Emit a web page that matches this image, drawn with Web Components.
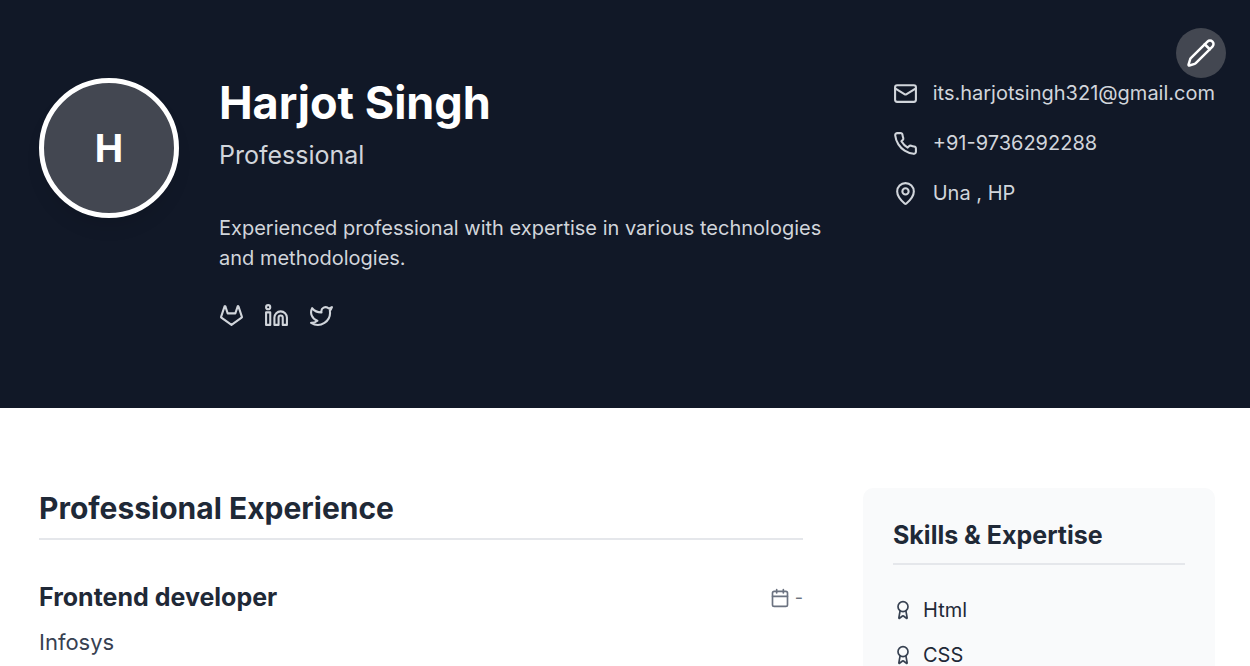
<!DOCTYPE html>
<html lang="en">
<head>
  <meta charset="utf-8">
  <meta name="viewport" content="width=device-width, initial-scale=1">
  <title>Harjot Singh</title>
  <style>
    body {
      margin: 0;
      background-color: #ffffff;
      color: #1f2937;
      font-family: Inter, "Liberation Sans", sans-serif;
      font-size: 20px;
      line-height: 30px;
    }
  </style>
</head>
<body>
  <resume-page>
    <profile-header slot="header" name="Harjot Singh" role-title="Professional">
      Experienced professional with expertise in various technologies and methodologies.
      <social-link slot="social" icon="gitlab" label="GitLab"></social-link>
      <social-link slot="social" icon="linkedin" label="LinkedIn"></social-link>
      <social-link slot="social" icon="twitter" label="Twitter"></social-link>
      <contact-item slot="contact" icon="mail" href="mailto:its.harjotsingh321@gmail.com">its.harjotsingh321@gmail.com</contact-item>
      <contact-item slot="contact" icon="phone" href="tel:+919736292288">+91-9736292288</contact-item>
      <contact-item slot="contact" icon="pin">Una , HP</contact-item>
    </profile-header>

    <resume-section heading="Professional Experience">
      <experience-item>
        Frontend developer
        <span slot="company">Infosys</span>
        <span slot="date">-</span>
      </experience-item>
    </resume-section>

    <skills-card slot="aside" heading="Skills &amp; Expertise">
      <skill-item>Html</skill-item>
      <skill-item>CSS</skill-item>
    </skills-card>
  </resume-page>

  <script>
    const icons = {
      mail: '<rect width="20" height="16" x="2" y="4" rx="2"/><path d="m22 7-8.97 5.7a1.94 1.94 0 0 1-2.06 0L2 7"/>',
      phone: '<path d="M22 16.92v3a2 2 0 0 1-2.18 2 19.79 19.79 0 0 1-8.63-3.07 19.5 19.5 0 0 1-6-6 19.79 19.79 0 0 1-3.07-8.67A2 2 0 0 1 4.11 2h3a2 2 0 0 1 2 1.72 12.84 12.84 0 0 0 .7 2.81 2 2 0 0 1-.45 2.11L8.09 9.91a16 16 0 0 0 6 6l1.27-1.27a2 2 0 0 1 2.11-.45 12.84 12.84 0 0 0 2.81.7A2 2 0 0 1 22 16.92z"/>',
      pin: '<path d="M20 10c0 4.993-5.539 10.193-7.399 11.799a1 1 0 0 1-1.202 0C9.539 20.193 4 14.993 4 10a8 8 0 0 1 16 0"/><circle cx="12" cy="10" r="3"/>',
      gitlab: '<path d="m22 13.29-3.33-10a.42.42 0 0 0-.14-.18.38.38 0 0 0-.22-.11.39.39 0 0 0-.23.07.42.42 0 0 0-.14.18l-2.26 6.67H8.32L6.1 3.26a.42.42 0 0 0-.1-.18.38.38 0 0 0-.26-.08.39.39 0 0 0-.23.07.42.42 0 0 0-.14.18L2 13.29a.74.74 0 0 0 .27.83L12 21l9.69-6.88a.71.71 0 0 0 .31-.83Z"/>',
      linkedin: '<path d="M16 8a6 6 0 0 1 6 6v7h-4v-7a2 2 0 0 0-2-2 2 2 0 0 0-2 2v7h-4v-7a6 6 0 0 1 6-6z"/><rect width="4" height="12" x="2" y="9"/><circle cx="4" cy="4" r="2"/>',
      twitter: '<path d="M22 4s-.7 2.1-2 3.4c1.6 10-9.4 17.3-18 11.6 2.2.1 4.4-.6 6-2C3 15.5.5 9.6 3 5c2.2 2.6 5.6 4.1 9 4-.9-4.2 4-6.6 7-3.8 1.1 0 3-1.2 3-1.2z"/>',
      pencil: '<path d="M21.174 6.812a1 1 0 0 0-3.986-3.987L3.842 16.174a2 2 0 0 0-.5.83l-1.321 4.352a.5.5 0 0 0 .623.622l4.353-1.32a2 2 0 0 0 .83-.497z"/><path d="m15 5 4 4"/>',
      calendar: '<path d="M8 2v4"/><path d="M16 2v4"/><rect width="18" height="18" x="3" y="4" rx="2"/><path d="M3 10h18"/>',
      award: '<path d="m15.477 12.89 1.515 8.526a.5.5 0 0 1-.81.47l-3.58-2.687a1 1 0 0 0-1.197 0l-3.586 2.686a.5.5 0 0 1-.81-.469l1.514-8.526"/><circle cx="12" cy="8" r="6"/>'
    }

    /**
     * Attaches an open shadow root with the given markup.
     *
     * @param {HTMLElement} element - The host element.
     * @param {string} markup - The styles and markup of the element.
     * @returns {ShadowRoot} - The shadow root.
     */
    function attach (element, markup) {
      const template = document.createElement('template')
      template.innerHTML = markup
      const root = element.attachShadow({ mode: 'open' })
      root.appendChild(template.content.cloneNode(true))
      return root
    }

    customElements.define('line-icon',

      /**
       * Represents a stroked icon, sized with --icon-size.
       */
      class extends HTMLElement {
        /**
         * Fired when the element is put in the DOM.
         */
        connectedCallback () {
          if (this.shadowRoot) return
          attach(this, `
            <style>
              :host {
                display: block;
                flex: none;
                width: var(--icon-size, 25px);
                height: var(--icon-size, 25px);
              }
              svg {
                display: block;
                width: 100%;
                height: 100%;
              }
            </style>
            <svg viewBox="0 0 24 24" fill="none" stroke="currentColor" stroke-width="2" stroke-linecap="round" stroke-linejoin="round" aria-hidden="true">${icons[this.getAttribute('name')]}</svg>
          `)
        }
      })

    customElements.define('resume-page',

      /**
       * Represents the page with its header, main column and side column.
       */
      class extends HTMLElement {
        /**
         * Creates an instance of this type.
         */
        constructor () {
          super()
          attach(this, `
            <style>
              :host {
                display: block;
              }
              #columns {
                display: grid;
                grid-template-columns: repeat(3, minmax(0, 1fr));
                gap: 60px;
                align-items: start;
                padding: 80px 35px 80px 39px;
              }
              main {
                grid-column: span 2;
              }
            </style>
            <slot name="header"></slot>
            <div id="columns">
              <main><slot></slot></main>
              <aside><slot name="aside"></slot></aside>
            </div>
          `)
        }
      })

    customElements.define('profile-header',

      /**
       * Represents the dark header with avatar, summary and contact details.
       */
      class extends HTMLElement {
        #root

        /**
         * Creates an instance of this type.
         */
        constructor () {
          super()
          this.#root = attach(this, `
            <style>
              :host {
                display: block;
                position: relative;
                background-color: #111827;
                color: #d1d5db;
              }
              header {
                display: flex;
                align-items: flex-start;
                gap: 40px;
                padding: 78px 35px 80px 39px;
              }
              #avatar {
                display: flex;
                flex: none;
                align-items: center;
                justify-content: center;
                box-sizing: border-box;
                width: 140px;
                height: 140px;
                border: 5px solid #ffffff;
                border-radius: 50%;
                background-color: #434751;
                box-shadow: 0 12px 18px -4px rgba(0, 0, 0, 0.1);
                color: #ffffff;
                font-size: 38px;
                font-weight: 700;
              }
              #info {
                flex: 1;
                min-width: 0;
              }
              h1 {
                margin: 0 0 10px;
                color: #ffffff;
                font-size: 45px;
                font-weight: 700;
                line-height: 50px;
              }
              #role {
                margin: 0 0 40px;
                font-size: 25px;
                line-height: 35px;
              }
              #bio {
                margin: 0 0 30px;
              }
              #social {
                display: flex;
                gap: 20px;
              }
              address {
                display: flex;
                flex: none;
                flex-direction: column;
                gap: 20px;
                font-style: normal;
              }
              button {
                position: absolute;
                top: 28px;
                right: 24px;
                display: flex;
                padding: 10px;
                border: none;
                border-radius: 50%;
                background-color: #434751;
                color: #ffffff;
                cursor: pointer;
                --icon-size: 30px;
              }
            </style>
            <header>
              <div id="avatar"></div>
              <div id="info">
                <h1></h1>
                <p id="role"></p>
                <p id="bio"><slot></slot></p>
                <div id="social"><slot name="social"></slot></div>
              </div>
              <address><slot name="contact"></slot></address>
            </header>
            <button type="button" aria-label="Edit"><line-icon name="pencil"></line-icon></button>
          `)
        }

        /**
         * Fired when the element is put in the DOM.
         */
        connectedCallback () {
          const name = this.getAttribute('name')
          this.#root.querySelector('#avatar').textContent = name.charAt(0)
          this.#root.querySelector('h1').textContent = name
          this.#root.querySelector('#role').textContent = this.getAttribute('role-title')
        }
      })

    customElements.define('social-link',

      /**
       * Represents an icon link to a social profile.
       */
      class extends HTMLElement {
        /**
         * Fired when the element is put in the DOM.
         */
        connectedCallback () {
          if (this.shadowRoot) return
          attach(this, `
            <style>
              :host {
                display: block;
              }
              a {
                display: block;
                color: inherit;
              }
              a:hover {
                color: #ffffff;
              }
            </style>
            <a href="#" aria-label="${this.getAttribute('label')}"><line-icon name="${this.getAttribute('icon')}"></line-icon></a>
          `)
        }
      })

    customElements.define('contact-item',

      /**
       * Represents one contact detail, linked if it has a href.
       */
      class extends HTMLElement {
        /**
         * Fired when the element is put in the DOM.
         */
        connectedCallback () {
          if (this.shadowRoot) return
          const href = this.getAttribute('href')
          attach(this, `
            <style>
              :host {
                display: flex;
                align-items: center;
                gap: 15px;
                white-space: nowrap;
              }
              a {
                color: inherit;
                text-decoration: none;
              }
            </style>
            <line-icon name="${this.getAttribute('icon')}"></line-icon>
            ${href ? `<a href="${href}"><slot></slot></a>` : '<span><slot></slot></span>'}
          `)
        }
      })

    customElements.define('resume-section',

      /**
       * Represents a section with an underlined heading.
       */
      class extends HTMLElement {
        /**
         * Fired when the element is put in the DOM.
         */
        connectedCallback () {
          if (this.shadowRoot) return
          attach(this, `
            <style>
              :host {
                display: block;
              }
              h2 {
                margin: 0 0 40px;
                padding-bottom: 10px;
                border-bottom: 2px solid #e5e7eb;
                font-size: 30px;
                font-weight: 700;
                line-height: 40px;
              }
            </style>
            <section>
              <h2></h2>
              <slot></slot>
            </section>
          `).querySelector('h2').textContent = this.getAttribute('heading')
        }
      })

    customElements.define('experience-item',

      /**
       * Represents a position with its company and dates.
       */
      class extends HTMLElement {
        /**
         * Creates an instance of this type.
         */
        constructor () {
          super()
          attach(this, `
            <style>
              :host {
                display: block;
              }
              #top {
                display: flex;
                align-items: center;
                justify-content: space-between;
                margin-bottom: 10px;
              }
              h3 {
                margin: 0;
                font-size: 25px;
                font-weight: 700;
                line-height: 35px;
              }
              #date {
                display: flex;
                align-items: center;
                gap: 5px;
                color: #6b7280;
                font-size: 18px;
                line-height: 25px;
                --icon-size: 20px;
              }
              #company {
                margin: 0;
                color: #374151;
                font-size: 22px;
                line-height: 35px;
              }
            </style>
            <article>
              <div id="top">
                <h3><slot></slot></h3>
                <div id="date"><line-icon name="calendar"></line-icon><slot name="date"></slot></div>
              </div>
              <p id="company"><slot name="company"></slot></p>
            </article>
          `)
        }
      })

    customElements.define('skills-card',

      /**
       * Represents the card that lists the skills.
       */
      class extends HTMLElement {
        /**
         * Fired when the element is put in the DOM.
         */
        connectedCallback () {
          if (this.shadowRoot) return
          attach(this, `
            <style>
              :host {
                display: block;
                padding: 30px;
                border-radius: 10px;
                background-color: #f9fafb;
              }
              h2 {
                margin: 0 0 30px;
                padding-bottom: 10px;
                border-bottom: 2px solid #e5e7eb;
                font-size: 25px;
                font-weight: 700;
                line-height: 35px;
              }
              #list {
                display: flex;
                flex-direction: column;
                gap: 15px;
              }
            </style>
            <h2></h2>
            <div id="list" role="list"><slot></slot></div>
          `).querySelector('h2').textContent = this.getAttribute('heading')
        }
      })

    customElements.define('skill-item',

      /**
       * Represents one skill.
       */
      class extends HTMLElement {
        /**
         * Creates an instance of this type.
         */
        constructor () {
          super()
          attach(this, `
            <style>
              :host {
                display: flex;
                align-items: center;
                gap: 10px;
                --icon-size: 20px;
              }
              line-icon {
                color: #374151;
              }
            </style>
            <line-icon name="award"></line-icon>
            <span role="listitem"><slot></slot></span>
          `)
        }
      })
  </script>
</body>
</html>
